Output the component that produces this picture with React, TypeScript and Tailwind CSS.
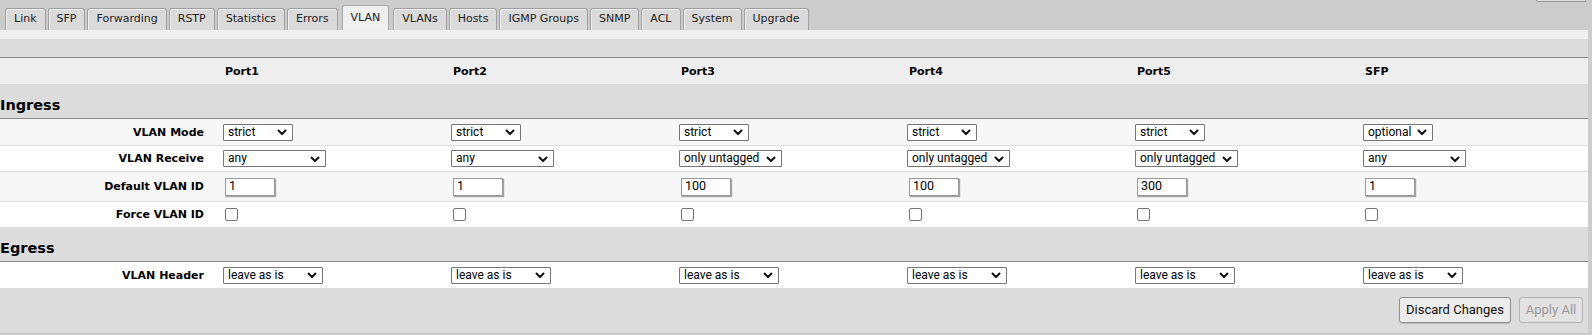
import React from "react"

const tabs = [
  "Link",
  "SFP",
  "Forwarding",
  "RSTP",
  "Statistics",
  "Errors",
  "VLAN",
  "VLANs",
  "Hosts",
  "IGMP Groups",
  "SNMP",
  "ACL",
  "System",
  "Upgrade",
]

const ports = [
  { name: "Port1", mode: "strict", receive: "any", vid: "1" },
  { name: "Port2", mode: "strict", receive: "any", vid: "1" },
  { name: "Port3", mode: "strict", receive: "only untagged", vid: "100" },
  { name: "Port4", mode: "strict", receive: "only untagged", vid: "100" },
  { name: "Port5", mode: "strict", receive: "only untagged", vid: "300" },
  { name: "SFP", mode: "optional", receive: "any", vid: "1" },
]

function Chevron() {
  return (
    <svg
      className="pointer-events-none absolute right-[6px] top-1/2 -translate-y-1/2"
      width="10"
      height="7"
      viewBox="0 0 10 7"
    >
      <polyline points="1,1.5 5,5.5 9,1.5" fill="none" stroke="#111" strokeWidth="2" />
    </svg>
  )
}

function Select({ value, width }: { value: string; width: string }) {
  return (
    <div className={`relative ${width} h-[17px]`}>
      <select
        defaultValue={value}
        className="block appearance-none w-full h-full border border-[#767676] rounded-[1px] bg-white pl-[4px] pr-[16px] text-[12px] leading-[15px] text-black font-['Roboto',sans-serif] outline-none"
      >
        <option>{value}</option>
      </select>
      <Chevron />
    </div>
  )
}

function Row({
  label,
  bg,
  h,
  border = true,
  children,
}: {
  label: string
  bg: string
  h: string
  border?: boolean
  children: React.ReactNode
}) {
  return (
    <div
      className={`grid grid-cols-[220px_repeat(6,228px)] items-center ${h} ${bg} ${
        border ? "border-b border-[#dddddd]" : ""
      }`}
    >
      <div className="text-right pr-[16px] text-[11px] font-bold leading-[17px]">{label}</div>
      {children}
    </div>
  )
}

export default function App() {
  return (
    <div className="w-[1592px] h-[335px] overflow-hidden bg-[#cccccc] font-['DejaVu_Sans',sans-serif] text-black">
      {/* tab bar */}
      <div className="flex items-end h-[30px] pl-[5px] gap-[2px]">
        {tabs.map((t) =>
          t === "VLAN" ? (
            <div
              key={t}
              className="h-[25px] mx-[2px] px-2 flex items-center text-[11px] text-[#222] bg-[#f0f0f0] border border-b-0 border-[#a8a8a8] rounded-t-[3px]"
            >
              {t}
            </div>
          ) : (
            <div
              key={t}
              className="h-[22px] px-2 flex items-center text-[11px] text-[#222] bg-[#dadada] border border-b-0 border-[#a0a0a0] rounded-t-[3px] shadow-[inset_1px_1px_0_#eeeeee]"
            >
              {t}
            </div>
          )
        )}
        <div className="ml-auto mr-[6px] self-start w-[50px] h-[2px] bg-[#dddddd] border-x border-b border-[#999999] rounded-b-[2px]" />
      </div>

      {/* content */}
      <div className="w-[1588px]">
        <div className="h-[9px] bg-[#efefef]" />
        <div className="h-[19px] bg-[#dcdcdc] border-b border-[#8a8a8a]" />

        {/* header */}
        <div className="grid grid-cols-[220px_repeat(6,228px)] items-center h-[26px] pt-[2px] bg-[#eeeeee]">
          <div />
          {ports.map((p) => (
            <div key={p.name} className="pl-[5px] text-[11px] font-bold">
              {p.name}
            </div>
          ))}
        </div>

        {/* Ingress */}
        <div className="h-[35px] bg-[#dcdcdc] border-b border-[#8a8a8a] flex items-end pb-[1px] text-[14.5px] font-bold">
          Ingress
        </div>

        <Row label="VLAN Mode" bg="bg-[#f7f7f7]" h="h-[27px]">
          {ports.map((p) => (
            <div key={p.name} className="pl-[3px]">
              <Select value={p.mode} width="w-[70px]" />
            </div>
          ))}
        </Row>
        <Row label="VLAN Receive" bg="bg-white" h="h-[26px]">
          {ports.map((p) => (
            <div key={p.name} className="pl-[3px]">
              <Select value={p.receive} width="w-[103px]" />
            </div>
          ))}
        </Row>
        <Row label="Default VLAN ID" bg="bg-[#f7f7f7]" h="h-[30px]">
          {ports.map((p) => (
            <div key={p.name} className="pl-[5px]">
              <input
                defaultValue={p.vid}
                className="block w-[50px] h-[18px] border border-[#9a9a9a] bg-white pl-[3px] text-[12.5px] font-['Roboto',sans-serif] shadow-[1px_1px_1px_rgba(0,0,0,0.35)] outline-none"
              />
            </div>
          ))}
        </Row>
        <Row label="Force VLAN ID" bg="bg-white" h="h-[25px]" border={false}>
          {ports.map((p) => (
            <div key={p.name} className="pl-[5px] flex items-center">
              <input
                type="checkbox"
                className="block appearance-none w-[13px] h-[13px] border border-[#767676] rounded-[2px] bg-white"
              />
            </div>
          ))}
        </Row>

        {/* Egress */}
        <div className="h-[35px] bg-[#dcdcdc] border-b border-[#8a8a8a] flex items-end pb-[1px] text-[14.5px] font-bold">
          Egress
        </div>

        <Row label="VLAN Header" bg="bg-white" h="h-[26px]" border={false}>
          {ports.map((p) => (
            <div key={p.name} className="pl-[3px]">
              <Select value="leave as is" width="w-[100px]" />
            </div>
          ))}
        </Row>

        {/* footer */}
        <div className="h-[46px] bg-[#dcdcdc] border-b border-[#c4c4c4] flex justify-end items-start pt-[9px] pr-[5px] gap-[8px] font-['Roboto',sans-serif]">
          <button className="h-[26px] w-[112px] rounded-[3px] border border-[#8f8f8f] bg-[#ececec] text-[13px] text-[#111] shadow-[0_1px_1px_rgba(0,0,0,0.15)]">
            Discard Changes
          </button>
          <button
            disabled
            className="h-[26px] w-[64px] rounded-[3px] border border-[#b4b4b4] bg-[#e2e2e2] text-[13px] text-[#999999]"
          >
            Apply All
          </button>
        </div>
      </div>
    </div>
  )
}
